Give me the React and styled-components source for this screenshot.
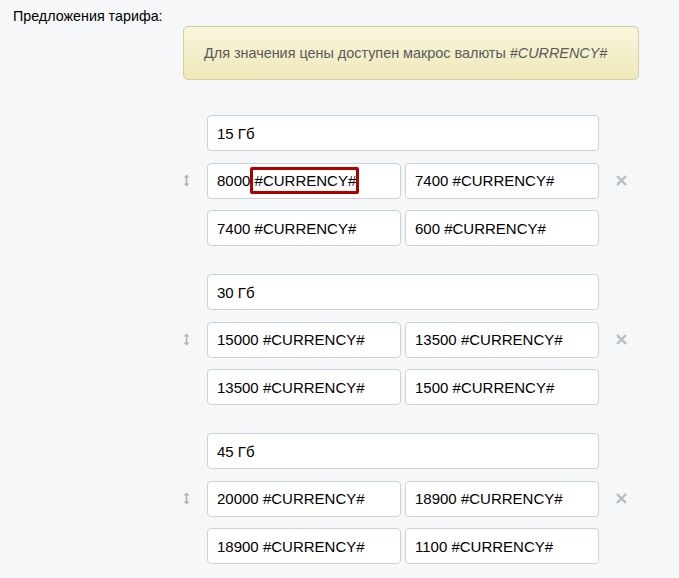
import React from 'react'
import styled, {createGlobalStyle} from 'styled-components'

const GlobalStyle = createGlobalStyle`
  html, body {
    margin: 0;
    padding: 0;
    background: #f5f7f8;
  }
  body {
    font-family: "Liberation Sans", Arial, sans-serif;
    font-size: 14px;
    color: #000;
  }
`

const Page = styled.div`
  display: grid;
  grid-template-columns: 183px 1fr;
  padding-top: 8px;
  min-height: 578px;
  box-sizing: border-box;
`

const Label = styled.div`
  padding-left: 13px;
  font-size: 14.3px;
  line-height: 16px;
`

const Content = styled.div`
  padding-top: 18px;
`

const Note = styled.div`
  width: 456px;
  height: 54px;
  box-sizing: border-box;
  display: flex;
  align-items: center;
  padding-left: 20px;
  border: 1px solid #d8cc9c;
  border-radius: 5px;
  background: linear-gradient(to bottom, #f9f6de, #efe8b9);
  color: #5a5a5a;
  font-size: 14.4px;
  margin-bottom: 35px;

  em {
    margin-left: 4px;
  }
`

const Groups = styled.div`
  display: flex;
  flex-direction: column;
  gap: 28px;
`

const Group = styled.div`
  display: grid;
  grid-template-columns: 24px 392px 40px;
  align-items: center;
`

const Fields = styled.div`
  display: grid;
  grid-template-columns: 1fr 1fr;
  column-gap: 4px;
  row-gap: 11.5px;
`

const Field = styled.div`
  grid-column: ${p => (p.$wide ? '1 / 3' : 'auto')};
  height: 36px;
  box-sizing: border-box;
  display: flex;
  align-items: center;
  padding-left: 9px;
  background: #fff;
  border: 1px solid #c9d3da;
  border-radius: 4px;
  font-size: 15px;
  line-height: 17px;
  white-space: pre;
`

const Mark = styled.span`
  position: relative;

  &::after {
    content: '';
    position: absolute;
    left: -5px;
    right: -3px;
    top: -5px;
    bottom: -5px;
    border: 3px solid #b00000;
    border-radius: 2px;
  }
`

const Handle = styled.div`
  display: flex;
  justify-content: flex-start;
`

const Remove = styled.div`
  display: flex;
  justify-content: center;
  padding-left: 4px;
`

const DragIcon = () => (
  <svg width="7" height="13" viewBox="0 0 7 13">
    <path d="M3.5 0.5 L6.5 3.5 H0.5 Z M3.5 12.5 L6.5 9.5 H0.5 Z" fill="#aeb3b7" />
    <rect x="2.7" y="3" width="1.6" height="7" fill="#aeb3b7" />
  </svg>
)

const CloseIcon = () => (
  <svg width="11" height="11" viewBox="0 0 11 11">
    <path d="M1 1 L10 10 M10 1 L1 10" stroke="#b4bcc2" strokeWidth="2.4" />
  </svg>
)

const offers = [
  {name: '15 Гб', prices: ['8000', '7400 #CURRENCY#', '7400 #CURRENCY#', '600 #CURRENCY#'], mark: true},
  {name: '30 Гб', prices: ['15000 #CURRENCY#', '13500 #CURRENCY#', '13500 #CURRENCY#', '1500 #CURRENCY#']},
  {name: '45 Гб', prices: ['20000 #CURRENCY#', '18900 #CURRENCY#', '18900 #CURRENCY#', '1100 #CURRENCY#']},
]

export default function App() {
  return (
    <>
      <GlobalStyle />
      <Page>
        <Label>Предложения тарифа:</Label>
        <Content>
          <Note>
            Для значения цены доступен макрос валюты <em>#CURRENCY#</em>
          </Note>
          <Groups>
            {offers.map(o => (
              <Group key={o.name}>
                <Handle>
                  <DragIcon />
                </Handle>
                <Fields>
                  <Field $wide>{o.name}</Field>
                  {o.prices.map((p, i) => (
                    <Field key={i}>
                      {o.mark && i === 0 ? (
                        <>
                          {p} <Mark>#CURRENCY#</Mark>
                        </>
                      ) : (
                        p
                      )}
                    </Field>
                  ))}
                </Fields>
                <Remove>
                  <CloseIcon />
                </Remove>
              </Group>
            ))}
          </Groups>
        </Content>
      </Page>
    </>
  )
}
